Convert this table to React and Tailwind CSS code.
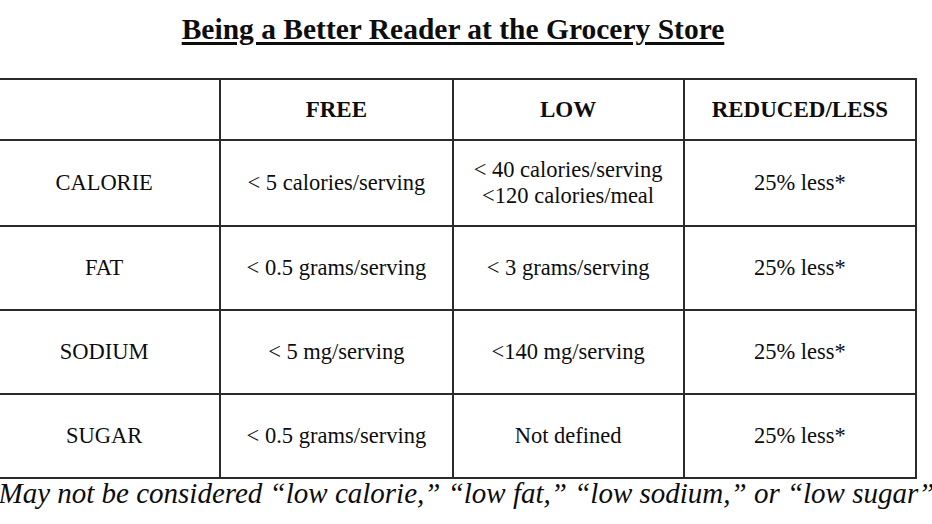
import React from 'react';

const rows = [
  { name: 'CALORIE', free: ['< 5 calories/serving'], low: ['< 40 calories/serving', '<120 calories/meal'], h: 'h-[86px]' },
  { name: 'FAT', free: ['< 0.5 grams/serving'], low: ['< 3 grams/serving'], h: 'h-[84px]' },
  { name: 'SODIUM', free: ['< 5 mg/serving'], low: ['<140 mg/serving'], h: 'h-[84px]' },
  { name: 'SUGAR', free: ['< 0.5 grams/serving'], low: ['Not defined'], h: 'h-[84px]' },
];

const cell = 'border-2 border-[#2b2b2b] text-center align-middle p-0';

export default function App() {
  return (
    <div className="w-[932px] h-[524px] overflow-hidden bg-white text-[#0d0d0d] font-['Liberation_Serif','Times_New_Roman',serif]">
      <div className="h-[78px] pt-[12px] pr-[26px]">
        <h1 className="text-center text-[29.5px] font-bold underline decoration-[3px] underline-offset-[3px] leading-[34px]">
          Being a Better Reader at the Grocery Store
        </h1>
      </div>

      <table className="ml-[-13px] border-collapse table-fixed w-[930px] text-[22.5px] leading-[26px]">
        <colgroup>
          <col className="w-[232px]" />
          <col className="w-[232px]" />
          <col className="w-[231px]" />
          <col className="w-[232px]" />
        </colgroup>
        <thead>
          <tr className="h-[61px] text-[23px]">
            <th className={cell}></th>
            <th className={cell + ' font-bold'}>FREE</th>
            <th className={cell + ' font-bold'}>LOW</th>
            <th className={cell + ' font-bold'}>REDUCED/LESS</th>
          </tr>
        </thead>
        <tbody>
          {rows.map(r => (
            <tr key={r.name} className={r.h}>
              <td className={cell}>{r.name}</td>
              <td className={cell}>{r.free.map(t => <div key={t}>{t}</div>)}</td>
              <td className={cell}>{r.low.map(t => <div key={t}>{t}</div>)}</td>
              <td className={cell}>25% less*</td>
            </tr>
          ))}
        </tbody>
      </table>

      <p className="ml-[-16px] whitespace-nowrap italic text-[29px] leading-[34px] mt-[-3px]">
        *May not be considered “low calorie,” “low fat,” “low sodium,” or “low sugar”
      </p>
    </div>
  );
}
